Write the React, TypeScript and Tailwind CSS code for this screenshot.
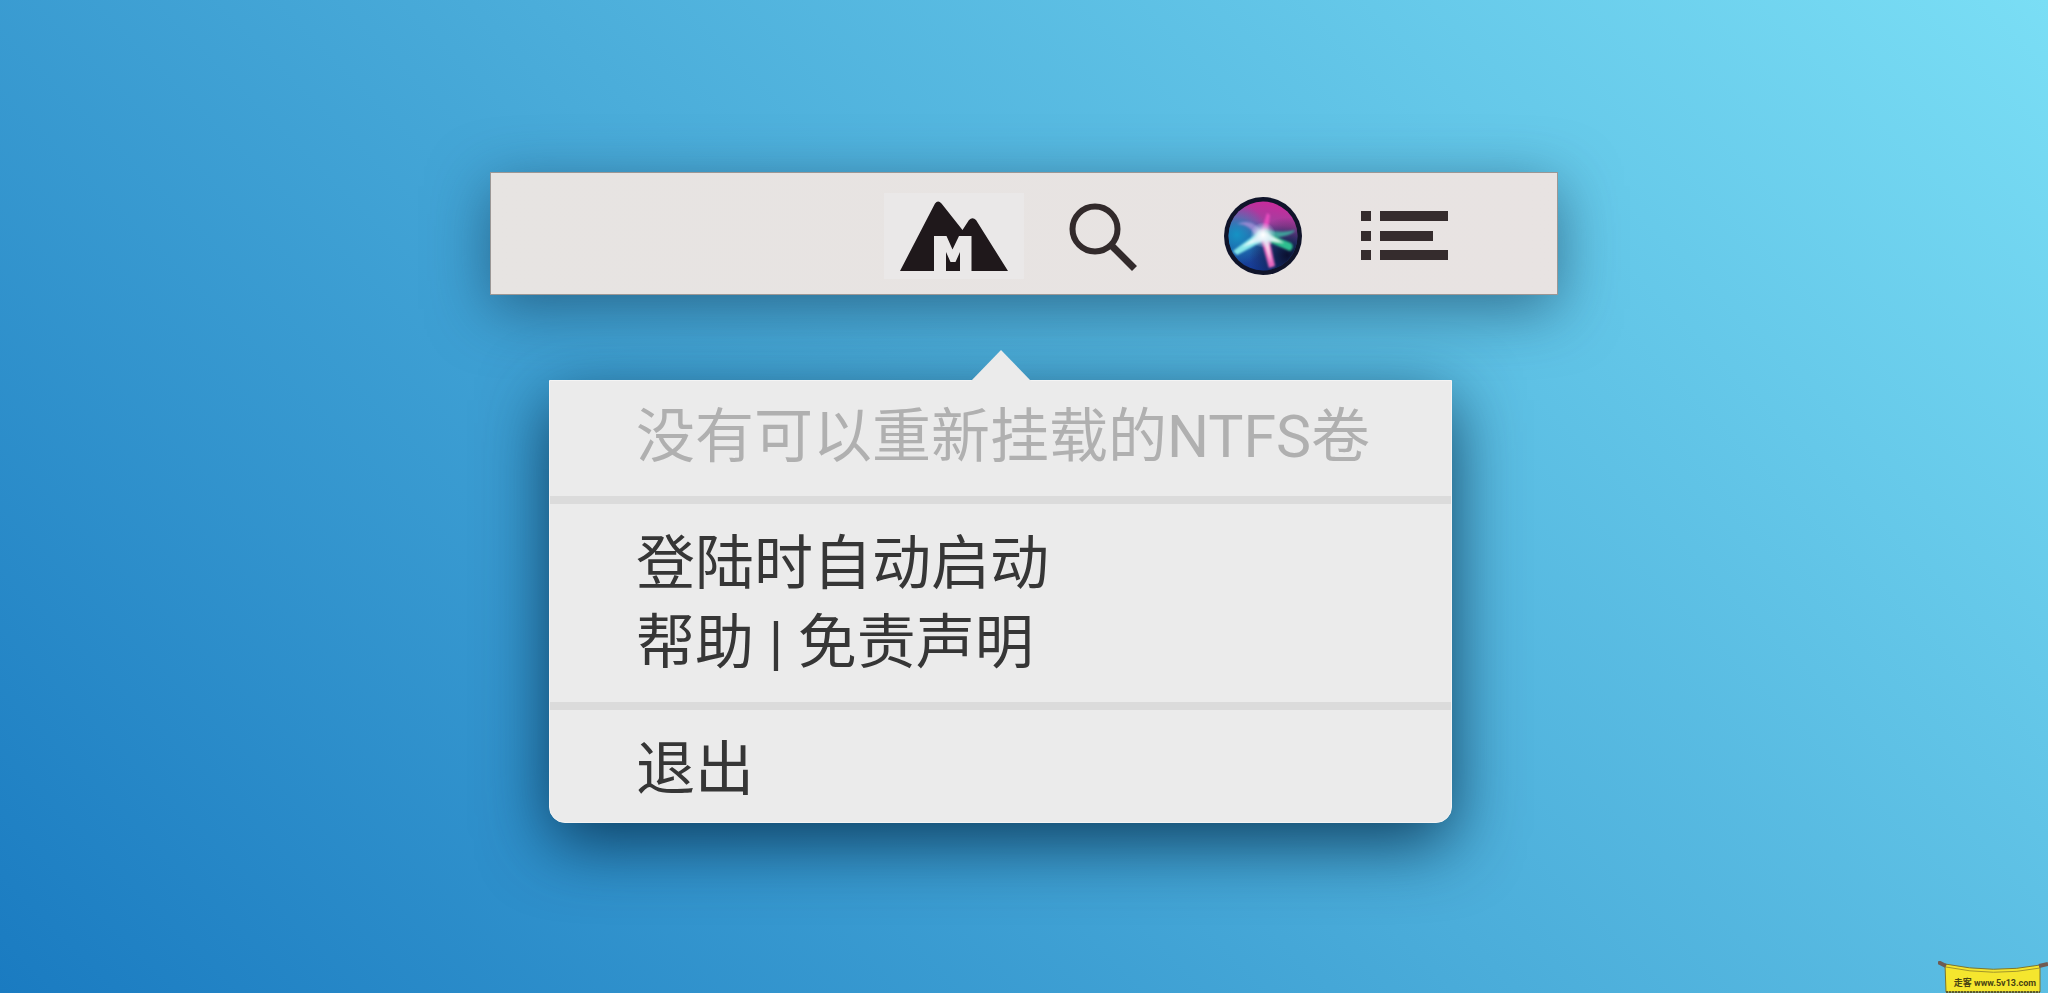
function MountainIcon() {
  return (
    <svg viewBox="0 0 108 70" className="h-[70px] w-[108px]" aria-hidden="true">
      <path
        d="M0 70 35 2.5Q38 -1.5 41.5 2.5L62.5 29 69 19Q72.5 15.5 76 19L108 70H71.5V35H59L52.5 48.5 46.5 35H34V70Z"
        fill="#1f181b"
      />
      <path d="M46 51 50.5 61H55.5L60 51V70H46Z" fill="#1f181b" />
    </svg>
  );
}

function SearchIcon() {
  return (
    <svg viewBox="0 0 70 70" className="size-[70px]" aria-hidden="true">
      <circle cx="26" cy="28" r="22.5" fill="none" stroke="#322a2b" strokeWidth="6" />
      <path d="M42.5 44.5 65.5 67.5" stroke="#322a2b" strokeWidth="7" />
    </svg>
  );
}

function SiriIcon() {
  return (
    <svg viewBox="0 0 78 78" className="size-[78px]" aria-hidden="true">
      <defs>
        <linearGradient id="orb" x1="0.6" y1="0" x2="0.4" y2="1">
          <stop offset="0" stopColor="#c92a9c" />
          <stop offset="0.3" stopColor="#a0409f" />
          <stop offset="0.55" stopColor="#2b55a0" />
          <stop offset="1" stopColor="#143a96" />
        </linearGradient>
        <radialGradient id="shade" cx="0.85" cy="0.78" r="0.55">
          <stop offset="0" stopColor="#0b1030" />
          <stop offset="1" stopColor="#0b1030" stopOpacity="0" />
        </radialGradient>
        <radialGradient id="cyan" cx="0.12" cy="0.48" r="0.45">
          <stop offset="0" stopColor="#1692c4" />
          <stop offset="1" stopColor="#1692c4" stopOpacity="0" />
        </radialGradient>
        <radialGradient id="core">
          <stop offset="0" stopColor="#fff" />
          <stop offset="0.4" stopColor="#e6f2fa" stopOpacity="0.8" />
          <stop offset="1" stopColor="#b9d8f0" stopOpacity="0" />
        </radialGradient>
        <filter id="soft">
          <feGaussianBlur stdDeviation="0.8" />
        </filter>
      </defs>
      <circle cx="39" cy="39" r="39" fill="#10142a" />
      <circle cx="39" cy="39" r="34.5" fill="url(#orb)" />
      <circle cx="39" cy="39" r="34.5" fill="url(#cyan)" />
      <circle cx="39" cy="39" r="34.5" fill="url(#shade)" />
      <g filter="url(#soft)">
        <path d="M40 38Q30 20 13 27Q26 27 32 40Z" fill="#a58fd8" opacity="0.8" />
        <path d="M36 38 43 16 46 18 43 40Z" fill="#e54bbd" />
        <path d="M40 32Q56 37 71 33Q70 39 42 42Z" fill="#3f9f9a" />
        <path d="M40 35 67 46Q71 50 66 54L40 43Z" fill="#2fbf90" />
        <path d="M36 34 9 54 13 58 41 43Z" fill="#86e6ea" />
        <path d="M36 39 45 71 51 69 45 40Z" fill="#e868c0" />
        <path d="M38 39 47 66 44 40Z" fill="#fbd5ee" />
        <path d="M38 34 60 46 40 43Z" fill="#dffcf2" />
        <path d="M40 34 18 50 41 42Z" fill="#e6fbfc" />
      </g>
      <circle cx="39" cy="38" r="13" fill="url(#core)" />
    </svg>
  );
}

function ListIcon() {
  return (
    <svg viewBox="0 0 87 50" className="h-[50px] w-[87px]" fill="#352c2d" aria-hidden="true">
      <path d="M0 0H10V10H0ZM19 0H87V10H19ZM0 20H10V30H0ZM19 20H72V30H19ZM0 39H10V49H0ZM19 39H87V49H19Z" />
    </svg>
  );
}

function MenuBar() {
  return (
    <header className="flex h-[123px] items-center justify-end border border-[#9b9795] bg-linear-to-r from-[#e7e4e2] to-[#e8e3e2] pt-1 pr-[109px] shadow-[0_14px_60px_rgba(20,60,90,0.6)]">
      <button
        aria-label="Mounty"
        className="flex h-[86px] w-[140px] items-center justify-center bg-[#eae8e8]"
      >
        <MountainIcon />
      </button>
      <button aria-label="搜索" className="ml-[45px]">
        <SearchIcon />
      </button>
      <button aria-label="Siri" className="ml-[85px]">
        <SiriIcon />
      </button>
      <button aria-label="通知中心" className="ml-[59px]">
        <ListIcon />
      </button>
    </header>
  );
}

function MenuItem({ label, disabled = false }: { label: string; disabled?: boolean }) {
  return (
    <button
      role="menuitem"
      disabled={disabled}
      className="block w-full px-[86px] text-left text-[59px] leading-[79px] whitespace-nowrap text-[#363636] disabled:text-[#b0b0b0]"
    >
      {label}
    </button>
  );
}

function DropdownMenu() {
  return (
    <div className="relative w-full max-w-[903px] rounded-b-2xl border border-[#f4f4f4] bg-[#ebebeb] shadow-[0_20px_68px_rgba(5,45,75,0.85)]">
      <svg
        viewBox="0 0 60 32"
        className="absolute bottom-full left-1/2 h-8 w-[60px] -translate-x-1/2"
        aria-hidden="true"
      >
        <path d="M0 32 30 1 60 32Z" fill="#ebebeb" />
      </svg>
      <div role="menu" className="divide-y-8 divide-[#dbdbdb]">
        <div className="pt-4 pb-5">
          <MenuItem label="没有可以重新挂载的NTFS卷" disabled />
        </div>
        <div className="py-5">
          <MenuItem label="登陆时自动启动" />
          <MenuItem label="帮助 | 免责声明" />
        </div>
        <div className="pt-5 pb-[13px]">
          <MenuItem label="退出" />
        </div>
      </div>
    </div>
  );
}

function Banner() {
  return (
    <a
      href="#"
      className="absolute right-0 bottom-0 flex h-8 w-[110px] items-end justify-center pb-1 pl-1 text-[9px] leading-3 font-bold whitespace-nowrap text-[#4a4413]"
    >
      <svg viewBox="0 0 110 32" className="absolute inset-0 size-full" aria-hidden="true">
        <path d="M7 3Q56 13 102 4V31H8Z" fill="#f5e62e" stroke="#80762a" />
        <path d="M8 6Q56 16 102 7" fill="none" stroke="#a2962b" />
        <path d="M8 31H102" stroke="#5f5a2a" strokeWidth="2" strokeDasharray="2 1" />
        <path d="M0 1 8 5M101 5 110 3" stroke="#705b52" strokeWidth="4" />
      </svg>
      <span className="relative">走客 www.5v13.com</span>
    </a>
  );
}

export default function App() {
  return (
    <main className="relative min-h-screen overflow-hidden bg-linear-[45deg,#1a7bc1_0%,#4badda_50%,#7adef5_100%] px-6 pt-[172px] pb-[169px] font-['Roboto','Noto_Sans_CJK_SC',sans-serif]">
      <div className="mx-auto max-w-[1068px]">
        <MenuBar />
        <div className="mt-[85px] pl-[59px]">
          <DropdownMenu />
        </div>
      </div>
      <Banner />
    </main>
  );
}
